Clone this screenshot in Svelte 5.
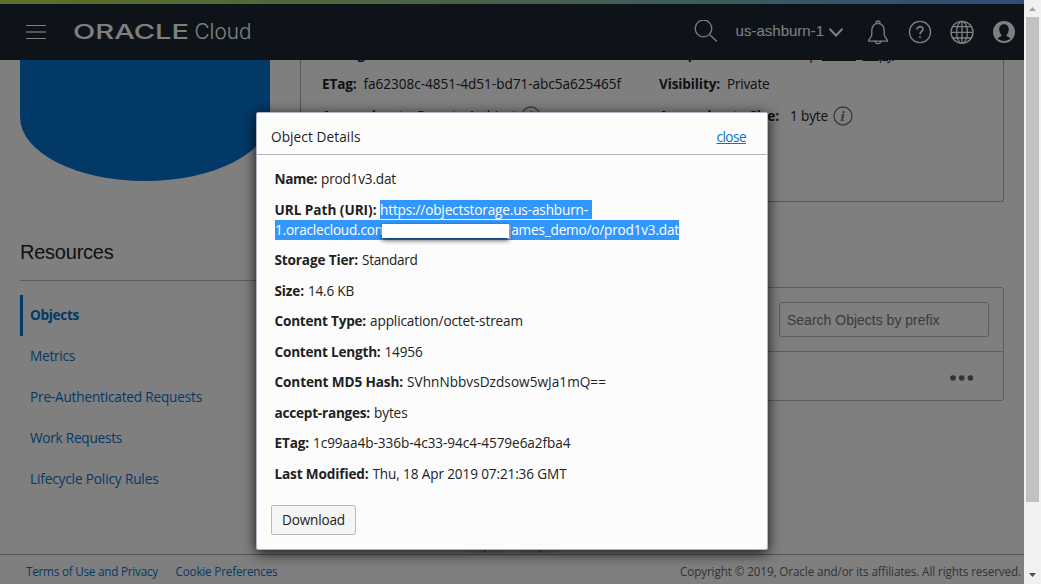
<script>
  // Spreads a run of text to a given width through its letter spacing.
  function fit(node, width) {
    const natural = node.getBoundingClientRect().width;
    node.style.letterSpacing = (width - natural) / node.textContent.length + 'px';
  }

  const resources = [
    { name: 'Objects', w: 49, active: true },
    { name: 'Metrics', w: 45 },
    { name: 'Pre-Authenticated Requests', w: 172 },
    { name: 'Work Requests', w: 92 },
    { name: 'Lifecycle Policy Rules', w: 128.5 }
  ];

  const before = [{ label: 'Name:', lw: 42.5, value: 'prod1v3.dat', vw: 75 }];
  const after = [
    { label: 'Storage Tier:', lw: 83.5, value: 'Standard', vw: 55.5 },
    { label: 'Size:', lw: 29.5, value: '14.6 KB', vw: 46 },
    { label: 'Content Type:', lw: 91.5, value: 'application/octet-stream', vw: 153 },
    { label: 'Content Length:', lw: 106, value: '14956', vw: 38 },
    { label: 'Content MD5 Hash:', lw: 128.5, value: 'SVhnNbbvsDzdsow5wJa1mQ==', vw: 199 },
    { label: 'accept-ranges:', lw: 95.5, value: 'bytes', vw: 33.5 },
    { label: 'ETag:', lw: 34.5, value: '1c99aa4b-336b-4c33-94c4-4579e6a2fba4', vw: 257.5 },
    { label: 'Last Modified:', lw: 94, value: 'Thu, 18 Apr 2019 07:21:36 GMT', vw: 194 }
  ];
</script>

{#snippet info()}
  <svg class="info" width="20" height="20" viewBox="0 0 20 20">
    <circle cx="10" cy="10" r="9" fill="none" stroke="#777" stroke-width="1.4" />
    <text x="7.6" y="15" font-family="Liberation Serif, serif" font-style="italic" font-size="15" font-weight="bold" fill="#777">i</text>
  </svg>
{/snippet}

{#snippet detail(row)}
  <div class="detail"><b use:fit={row.lw}>{row.label}</b><span use:fit={row.vw}>{row.value}</span></div>
{/snippet}

<div class="window">
  <div class="page">
    <div class="stripe"></div>
    <header>
      <svg class="menu" width="20" height="16" viewBox="0 0 20 16">
        <path d="M0 1.5H20M0 14.5H20" stroke="#fff" />
        <path d="M0 8H20" stroke="#aaa" stroke-width="2" />
      </svg>
      <svg class="logo" width="200" height="32" viewBox="0 -4 200 32">
        <text x="-1" y="19" font-family="Inter, sans-serif" font-weight="500" font-size="20.5" textLength="116" lengthAdjust="spacingAndGlyphs">ORACLE</text>
        <text x="120.5" y="19" font-family="Inter, sans-serif" font-weight="300" font-size="21.5" textLength="57" lengthAdjust="spacingAndGlyphs">Cloud</text>
      </svg>
      <div class="tools">
        <svg width="24" height="24" viewBox="0 0 24 24"><circle cx="9.5" cy="8.5" r="8.3" /><path d="M15.5 14.5L23 21.5" /></svg>
        <span class="region">us-ashburn-1</span>
        <svg class="chev" width="16" height="10" viewBox="0 0 16 10"><path d="M1.5 1.7L8 8.5L14.5 1.7" /></svg>
        <svg class="bell" width="22" height="26" viewBox="0 0 22 26"><path d="M9 4.2V3.5Q9 2 11 2T13 3.5V4.2M11 4.3C6 4.6 4.8 8 4.8 12V15.5C4.8 18 1.5 20.5 1.5 22.2H20.5C20.5 20.5 17.2 18 17.2 15.5V12C17.2 8 16 4.6 11 4.3ZM8.3 22.5Q8.5 24.6 11 24.6T13.7 22.5" /></svg>
        <svg class="help" width="24" height="24" viewBox="0 0 24 24"><circle cx="12" cy="12" r="10.6" /><path stroke-width="1.7" d="M9 9.4C9 5.6 15.2 5.9 15 9.3C14.9 11.6 12 11.7 12 14.2M12 16.2V18" /></svg>
        <svg class="globe" width="24" height="24" viewBox="0 0 24 24"><circle cx="12" cy="12.3" r="11" /><ellipse cx="12" cy="12.3" rx="5.4" ry="11" /><path d="M12 1.3V23.3M1 12.3H23M3 6.6H21M3 18H21" /></svg>
        <svg class="user" width="24" height="24" viewBox="0 0 24 24">
          <circle class="disc" cx="12" cy="12" r="11" />
          <path class="person" d="M12 4.2C15 4.2 16.8 6.4 16.8 9.2C16.8 11.6 15.6 14 14.4 15C14.4 16.5 16.5 17 18.6 18.3C15 22 9 22 5.4 18.3C7.5 17 9.6 16.5 9.6 15C8.4 14 7.2 11.6 7.2 9.2C7.2 6.4 9 4.2 12 4.2Z" />
        </svg>
      </div>
    </header>

    <main>
      <aside>
        <div class="bucket"></div>
        <h2><span use:fit={93.5}>Resources</span></h2>
        <nav>
          {#each resources as r}
            <a class:active={r.active}><span use:fit={r.w}>{r.name}</span></a>
          {/each}
        </nav>
      </aside>
      <section>
        <div class="card">
          <div class="facts">
            <div><b use:fit={84}>Storage Tier:</b><span>Standard</span></div>
            <div class="comp"><b use:fit={93}>Compartment:</b><span use:fit={57}>demo.comp</span><u use:fit={34}>Show</u><u use:fit={31}>Copy</u></div>
            <div class="up"><b use:fit={34.5}>ETag:</b><span use:fit={257.5}>fa62308c-4851-4d51-bd71-abc5a625465f</span></div>
            <div class="up"><b use:fit={61}>Visibility:</b><span use:fit={42.5}>Private</span></div>
            <div><b use:fit={139}>Approximate Count:</b><span use:fit={48}>1 object</span>{@render info()}</div>
            <div><b use:fit={120}>Approximate Size:</b><span class="size" use:fit={38}>1 byte</span>{@render info()}</div>
          </div>
        </div>
        <div class="table">
          <div class="bar"><div class="search">Search Objects by prefix</div></div>
          <div class="row"><svg width="24" height="6" viewBox="0 0 24 6"><circle cx="3" cy="3" r="2.8" /><circle cx="11.7" cy="3" r="2.8" /><circle cx="20.4" cy="3" r="2.8" /></svg></div>
        </div>
        <div class="pager">
          <div><svg width="8" height="12" viewBox="0 0 8 12"><path d="M7 1L2 6L0 12" /></svg></div>
          <div><svg width="8" height="12" viewBox="0 0 8 12"><path d="M1 1L6 6L8 12" /></svg></div>
        </div>
      </section>
    </main>

    <footer>
      <a use:fit={132}>Terms of Use and Privacy</a>
      <a use:fit={102}>Cookie Preferences</a>
      <span class="copy" use:fit={341}>Copyright © 2019, Oracle and/or its affiliates. All rights reserved.</span>
    </footer>

    <div class="overlay">
      <div class="dialog">
        <div class="title"><span class="name" use:fit={89.5}>Object Details</span><a use:fit={29.5}>close</a></div>
        <div class="body">
          {#each before as row}{@render detail(row)}{/each}
          <div class="detail uri"><b use:fit={102}>URL Path (URI):</b><span class="sel first"><span use:fit={208}>https://objectstorage.us-ashburn-</span></span></div>
          <div class="line2"><div class="sel"><span use:fit={112}>1.oraclecloud.com</span><span class="tail" use:fit={171}>james_demo/o/prod1v3.dat</span></div><div class="mask"></div></div>
          {#each after as row}{@render detail(row)}{/each}
          <button><span use:fit={63}>Download</span></button>
        </div>
      </div>
    </div>
  </div>
  <div class="scroll">
    <svg width="17" height="17" viewBox="0 0 17 17"><path fill="#a3a3a3" d="M5 11L8.5 7L12 11Z" /></svg>
    <div class="thumb"></div>
    <svg class="down" width="17" height="17" viewBox="0 0 17 17"><path fill="#505050" d="M5 6L8.5 10L12 6Z" /></svg>
  </div>
</div>

<style>
  :global(body) { margin: 0; overflow: hidden; }
  * { box-sizing: border-box; }
  .window { display: flex; width: 1041px; height: 584px; overflow: hidden; font: 13.6px/20px "Open Sans", "Noto Sans", sans-serif; color: #222; }
  .page { position: relative; width: 1024px; height: 584px; display: flex; flex-direction: column; background: #fff; overflow: hidden; white-space: nowrap; }
  .page span, .page b, .page a, .page u { flex: none; }
  .stripe { height: 4px; flex: none; background: linear-gradient(90deg, #b5e04e, #a0cf78 30%, #80b8b4 66%, #5b9af0); }
  header { height: 56px; flex: none; display: flex; align-items: center; padding-left: 26px; background: #1c2634; }
  .menu { flex: none; }
  .logo { margin-left: 28px; flex: none; fill: #fff; }
  .tools { margin-left: auto; display: flex; align-items: center; padding-right: 8px; }
  .tools svg { fill: none; stroke: #fff; stroke-width: 1.3; flex: none; }
  .tools .region { font: 15px/18px "Liberation Sans", sans-serif; color: #fff; margin: 0 4px 2px 18px; }
  .tools .chev { stroke-width: 2; }
  .bell { margin-left: 23px; }
  .help { margin-left: 19px; }
  .globe { margin-left: 18px; }
  .user { margin-left: 18px; }
  .tools .disc { fill: #fff; stroke: none; }
  .tools .person { fill: #1c2634; stroke: none; }
  main { height: 494px; flex: none; display: flex; gap: 30px; padding-left: 20px; overflow: hidden; }
  aside { width: 250px; }
  .bucket { height: 121px; background: #0572ce; border-radius: 0 0 125px 125px / 0 0 64px 64px; }
  h2 { margin: 0; height: 100px; padding-top: 59px; font: 20px/24px "Liberation Sans", sans-serif; color: #222; border-bottom: 1px solid #b4bac6; }
  nav { padding-top: 14px; }
  nav a { display: flex; align-items: center; height: 41px; padding: 0 0 2px 10px; color: #0572ce; }
  nav .active { padding-left: 7px; border-left: 3px solid #0572ce; font-weight: 700; }
  section { width: 704px; display: flex; flex-direction: column; }
  .card { height: 142px; flex: none; border: 1px solid #aaa; border-top: 0; border-radius: 0 0 3px 3px; padding: 0 0 0 21px; overflow: hidden; }
  .facts { display: grid; grid-template-columns: 337px auto; grid-auto-rows: 31px; margin-top: -22px; }
  .facts > div { display: flex; align-items: center; gap: 7px; }
  .facts .up { padding-bottom: 2px; }
  .facts .comp { gap: 6.5px; }
  .size { margin-left: 4px; }
  .info { margin-left: -2px; }
  .table { margin-top: 85px; height: 114px; flex: none; border: 1px solid #b4bac6; border-radius: 3px; }
  .bar { height: 64px; border-bottom: 1px solid #b4bac6; display: flex; justify-content: flex-end; padding: 14px 14px 0 0; }
  .search { width: 210px; height: 35px; border: 1px solid #b4bac6; border-radius: 3px; padding-left: 7px; font: 14px/34px "Liberation Sans", sans-serif; color: #757575; }
  .row { height: 48px; display: flex; align-items: center; justify-content: flex-end; padding: 4px 29px 0 0; fill: #666; }
  .pager { margin: 134px 0 0 170px; display: flex; gap: 14px; }
  .pager div { width: 35px; height: 18px; background: #eee; display: flex; justify-content: center; align-items: flex-end; }
  .pager svg { fill: none; stroke: #555; }
  footer { height: 30px; flex: none; border-top: 1px solid #aaa; padding: 2px 3px 0 26px; display: flex; align-items: center; gap: 17.5px; font-size: 11.7px; }
  footer a { color: #0572ce; }
  footer .copy { margin-left: auto; color: #666; }
  .overlay { position: absolute; inset: 0; background: rgba(0, 0, 0, .5); padding: 112px 0 0 256px; }
  .dialog { width: 512px; height: 438px; background: #fcfcfc; border: 1px solid #aeb4c2; border-radius: 2px; box-shadow: 0 3px 14px rgba(0, 0, 0, .85); }
  .title { height: 42px; border-bottom: 1px solid #aeb4c2; display: flex; align-items: center; justify-content: space-between; padding: 7px 21px 0 14px; }
  .name { font-weight: 500; }
  .title a { color: #0572ce; text-decoration: underline; }
  .body { padding: 9px 18px 0 17.5px; }
  .detail { height: 30.5px; display: flex; align-items: center; gap: 4px; }
  .uri { height: 30px; }
  .sel { background: #3297fd; color: #fff; }
  .first { width: 212px; line-height: 19px; height: 19px; margin-left: -.5px; }
  .line2 { position: relative; height: 20px; width: 404px; margin: -5px 0 5.5px .5px; }
  .line2 .sel { display: flex; justify-content: space-between; height: 20px; }
  .mask { position: absolute; left: 107px; top: 4px; width: 127px; height: 14px; background: #fff; box-shadow: 0 2px 5px rgba(0, 0, 0, .75); }
  button { display: block; margin: 15.5px 0 0 -3.5px; width: 85px; height: 30px; padding: 0; background: #f5f5f6; border: 1px solid #b4bac6; border-radius: 2px; font: inherit; color: #222; }
  .scroll { width: 17px; height: 584px; background: #f1f1f1; display: flex; flex-direction: column; }
  .thumb { width: 13px; height: 485px; margin-left: 2px; background: #c1c1c1; }
  .down { margin-top: auto; }
</style>
